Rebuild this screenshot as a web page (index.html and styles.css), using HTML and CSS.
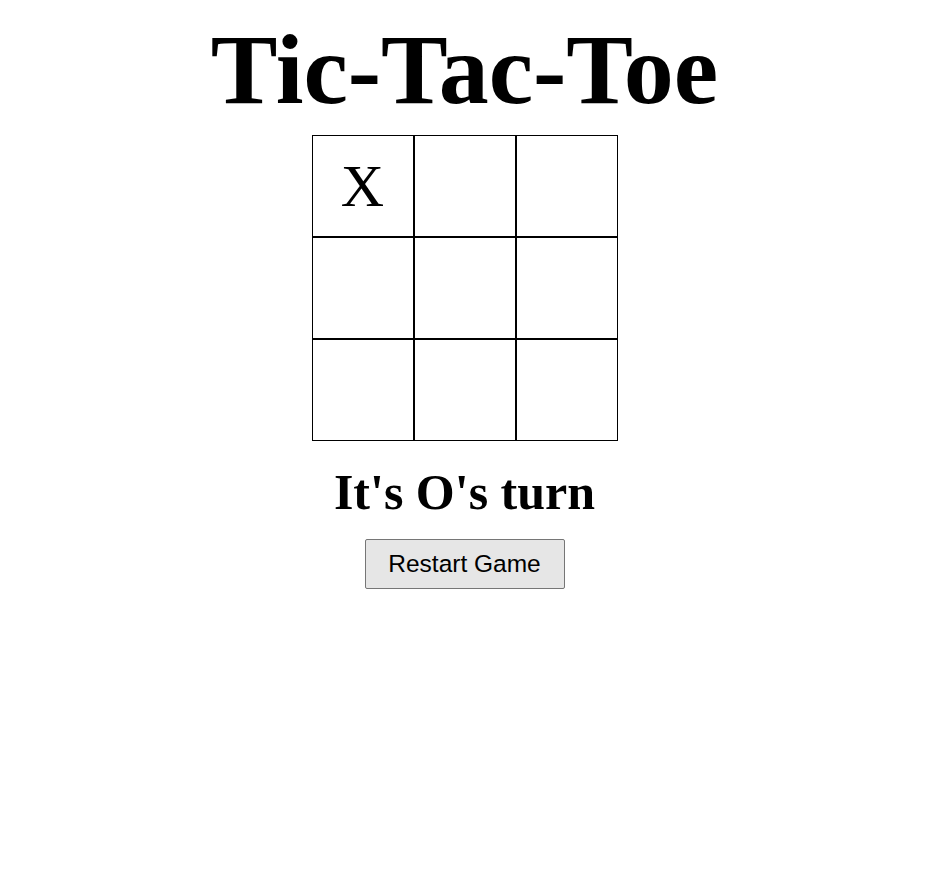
FILE: index.html
```html
<!DOCTYPE html>
<html lang="en">
<head>
<meta charset="utf-8">
<title>Tic-Tac-Toe</title>
<link rel="stylesheet" href="styles.css">
</head>
<body>
<main class="game">
  <h1 class="title">Tic-Tac-Toe</h1>
  <div class="board">
    <div class="cell">X</div>
    <div class="cell"></div>
    <div class="cell"></div>
    <div class="cell"></div>
    <div class="cell"></div>
    <div class="cell"></div>
    <div class="cell"></div>
    <div class="cell"></div>
    <div class="cell"></div>
  </div>
  <h2 class="status">It's O's turn</h2>
  <button class="restart" type="button">Restart Game</button>
</main>
</body>
</html>
```

FILE: styles.css
```css
html, body {
  margin: 0;
  padding: 0;
  background: #ffffff;
  color: #000000;
  font-family: "Liberation Serif", "Times New Roman", serif;
}

.game {
  display: flex;
  flex-direction: column;
  align-items: center;
  padding-top: 12px;
}

.title {
  margin: 0;
  font-size: 100px;
  font-weight: bold;
  line-height: normal;
}

.board {
  margin-top: 8px;
  display: grid;
  grid-template-columns: repeat(3, 102px);
  grid-template-rows: repeat(3, 102px);
}

.cell {
  box-sizing: border-box;
  border: 1px solid #000000;
  display: flex;
  align-items: center;
  justify-content: center;
  font-size: 60px;
  line-height: 1;
}

.status {
  margin: 22px 0 0;
  font-size: 50px;
  font-weight: bold;
  line-height: normal;
}

.restart {
  margin-top: 18px;
  box-sizing: border-box;
  width: 200px;
  height: 50px;
  padding: 10px 20px;
  font-family: "Liberation Sans", Arial, sans-serif;
  font-size: 24.5px;
  color: #000000;
  background: #e6e6e6;
  border: 1px solid #767676;
  border-radius: 2px;
}
```
